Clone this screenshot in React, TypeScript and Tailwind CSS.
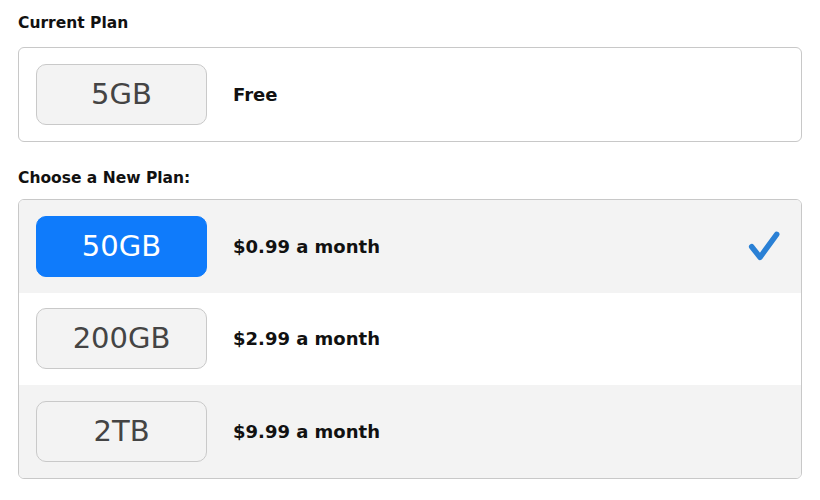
const PLANS = [
  { size: '50GB', price: '$0.99 a month', selected: true },
  { size: '200GB', price: '$2.99 a month', selected: false },
  { size: '2TB', price: '$9.99 a month', selected: false },
];

function Pill({ label, active = false }: { label: string; active?: boolean }) {
  return (
    <div
      className={
        active
          ? 'w-[171px] h-[61px] rounded-[10px] bg-[#0f7bfb] border border-[#0f7bfb] text-white flex items-center justify-center text-[29px]'
          : 'w-[171px] h-[61px] rounded-[10px] bg-[#f3f3f3] border border-[#c9c9c9] text-[#444] flex items-center justify-center text-[29px]'
      }
    >
      {label}
    </div>
  );
}

export default function App() {
  return (
    <div className="w-[820px] h-[500px] bg-white px-[18px] pt-[12px] font-['DejaVu_Sans',sans-serif] overflow-hidden">
      <h2 className="text-[15.5px] font-bold text-[#111] leading-[22px] mb-[13px]">Current Plan</h2>
      <div className="h-[95px] border border-[#c8c8c8] rounded-[6px] flex items-center px-[17px]">
        <Pill label="5GB" />
        <span className="ml-[26px] text-[18px] font-bold text-[#111]">Free</span>
      </div>

      <h2 className="text-[15.5px] font-bold text-[#111] leading-[22px] mt-[25px] mb-[10px]">Choose a New Plan:</h2>
      <div className="border border-[#c8c8c8] rounded-[6px] overflow-hidden">
        {PLANS.map((plan, i) => (
          <div
            key={plan.size}
            className={`h-[92.5px] flex items-center px-[17px] ${i % 2 === 0 ? 'bg-[#f3f3f3]' : 'bg-white'}`}
          >
            <Pill label={plan.size} active={plan.selected} />
            <span className="ml-[26px] text-[18px] font-bold text-[#111]">{plan.price}</span>
            {plan.selected && (
              <svg viewBox="0 0 36 32" className="ml-auto mr-[2px] w-[36px] h-[32px]" fill="none">
                <path
                  d="M5.7 16.7 14 27.3 30.7 4.3"
                  stroke="#2a80d5"
                  strokeWidth="5.5"
                  strokeLinecap="round"
                  strokeLinejoin="round"
                />
              </svg>
            )}
          </div>
        ))}
      </div>
    </div>
  );
}
